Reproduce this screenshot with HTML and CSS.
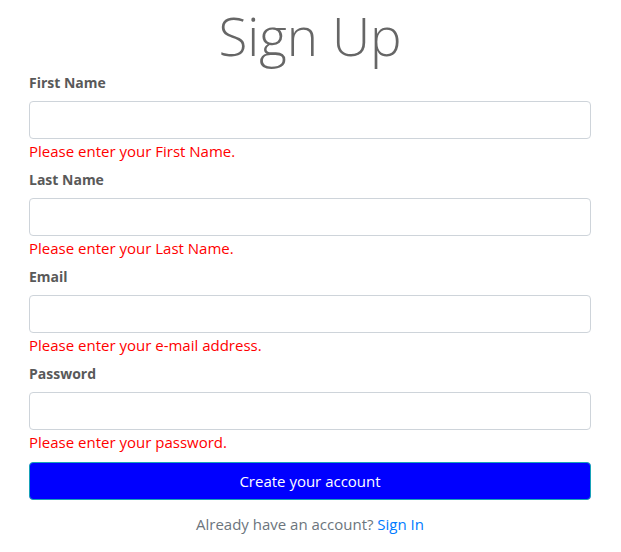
FILE: index.html
```html
<!DOCTYPE html>
<html lang="en">
<head>
<meta charset="utf-8">
<title>Sign Up</title>
<link rel="stylesheet" href="styles.css">
</head>
<body>
<main class="page">
  <h1 class="title">Sign Up</h1>
  <form class="signup">
    <div class="group">
      <label class="label" for="first">First Name</label>
      <input class="control" id="first" type="text">
      <div class="error">Please enter your First Name.</div>
    </div>
    <div class="group">
      <label class="label" for="last">Last Name</label>
      <input class="control" id="last" type="text">
      <div class="error">Please enter your Last Name.</div>
    </div>
    <div class="group">
      <label class="label" for="email">Email</label>
      <input class="control" id="email" type="email">
      <div class="error">Please enter your e-mail address.</div>
    </div>
    <div class="group">
      <label class="label" for="password">Password</label>
      <input class="control" id="password" type="password">
      <div class="error">Please enter your password.</div>
    </div>
    <button class="submit" type="button">Create your account</button>
    <p class="footer">Already have an account? <a class="link" href="#">Sign In</a></p>
  </form>
</main>
</body>
</html>
```
FILE: styles.css
```css
* { box-sizing: border-box; }
html, body { margin: 0; padding: 0; background: #fff; }
body {
  font-family: "Open Sans", "Noto Sans", sans-serif;
  font-size: 15px;
  line-height: 24px;
  color: #212529;
}
.page {
  padding: 0 30px 0 29px;
}
.title {
  margin: 0;
  padding-top: 2px;
  text-align: center;
  font-weight: 300;
  font-size: 53px;
  line-height: 67px;
  color: #666;
}
.signup {
  display: flex;
  flex-direction: column;
}
.group {
  display: flex;
  flex-direction: column;
  margin-bottom: 3px;
}
.label {
  font-weight: 700;
  color: #595959;
  padding-top: 2px;
  margin-bottom: 6px;
  font-size: 14px;
}
.control {
  display: block;
  width: 100%;
  height: 38px;
  border: 1px solid #ced4da;
  border-radius: 4px;
  background: #fff;
  padding: 6px 12px;
  font: inherit;
}
.error {
  color: #ff0000;
}
.submit {
  margin-top: 5px;
  height: 38px;
  width: 100%;
  background: #0000ff;
  border: 1px solid #17a2b8;
  border-radius: 4px;
  color: #fff;
  font: inherit;
}
.footer {
  margin: 12px 0 0;
  text-align: center;
  color: #6c757d;
}
.link {
  color: #007bff;
  text-decoration: none;
}
```
